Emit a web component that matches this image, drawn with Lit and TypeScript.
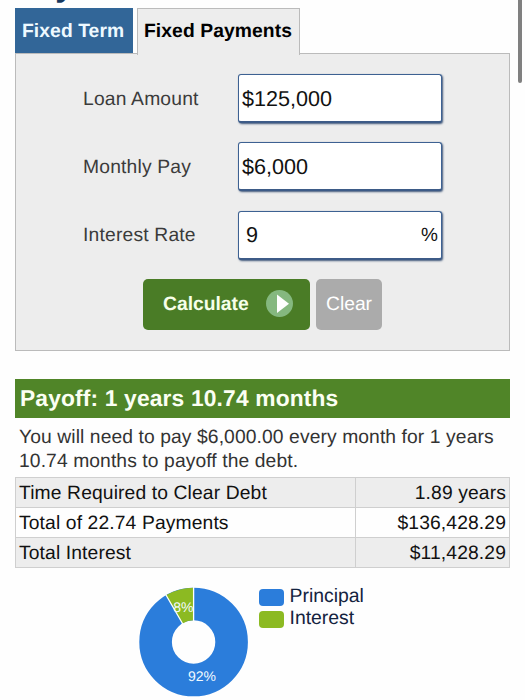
import { LitElement, html, css } from "lit";
import { customElement } from "lit/decorators.js";

@customElement("app-root")
export class AppRoot extends LitElement {
  static styles = css`
    :host {
      display: block;
      position: relative;
      width: 525px;
      height: 700px;
      overflow: hidden;
      background: #fefefe;
      font-family: "Liberation Sans", Arial, sans-serif;
      text-rendering: geometricPrecision;
      color: #111;
    }
    * { box-sizing: border-box; }
    .page { width: 495px; margin-left: 15px; }
    .title {
      margin: 0;
      height: 8px;
      display: flex;
      align-items: flex-end;
      font-size: 33px;
      line-height: 44px;
      color: #14375f;
    }
    .title span { margin-bottom: 1px; }
    .tabs { display: flex; gap: 4px; height: 46px; }
    .tab {
      font-weight: bold;
      font-size: 19.3px;
      line-height: 46px;
      height: 45px;
      white-space: nowrap;
      letter-spacing: 0.08px;
    }
    .term { width: 117.5px; padding-left: 7px; background: #326698; color: #eef9ff; line-height: 47px; }
    .payments {
      position: relative;
      width: 163.5px;
      height: 47px;
      padding-left: 6.5px;
      background: #ededed;
      border: 1px solid #bbb;
      border-bottom: 0;
      color: #000;
      z-index: 1;
    }
    .panel {
      height: 298px;
      margin-top: -1px;
      background: #ededed;
      border: 1px solid #bbb;
      padding: 20px 0 0 67px;
    }
    .row { display: flex; align-items: center; height: 49px; margin-bottom: 19.3px; }
    .label { width: 155px; padding-top: 2px; font-size: 19.3px; letter-spacing: 0.18px; color: #3b3b3b; }
    .field {
      width: 204px;
      height: 49px;
      display: flex;
      align-items: center;
      justify-content: space-between;
      padding: 1px 3px 0;
      background: #fff;
      border: 1.5px solid #3d6192;
      border-bottom: 2px solid #3d5b87;
      border-radius: 3px;
      box-shadow: 1px 1px 2px #40587a;
      font-size: 21.6px;
      color: #111;
    }
    .rate { padding-left: 7px; }
    .percent { font-size: 19px; padding-top: 1px; }
    .actions { display: flex; gap: 6px; margin-left: 60px; }
    .calculate {
      display: flex;
      align-items: center;
      justify-content: space-between;
      width: 167px;
      height: 51px;
      padding: 2px 17px 0 20px;
      border-radius: 5px;
      background: #4a7c26;
      color: #f6ffe9;
      font-size: 19.3px;
      font-weight: bold;
    }
    .arrow { width: 27px; height: 27px; margin-top: -4px; }
    .clear {
      width: 66px;
      height: 51px;
      border-radius: 5px;
      background: #ababab;
      color: #fff;
      font-size: 19.3px;
      line-height: 51px;
      text-align: center;
    }
    .payoff {
      margin: 28px 0 0;
      height: 39px;
      padding-left: 5px;
      background: #508528;
      color: #fbfff3;
      font-size: 22.8px;
      letter-spacing: 0.15px;
      line-height: 38px;
    }
    .summary {
      margin: 7px 0 5px;
      padding-left: 4px;
      height: 47px;
      color: #333;
      font-size: 19.3px;
      letter-spacing: 0.09px;
      line-height: 24px;
      padding-top: 1px;
      white-space: nowrap;
    }
    .table { border: 1px solid #cfcfcf; height: 91px; }
    .line {
      display: grid;
      grid-template-columns: 340px 1fr;
      height: 30px;
      border-bottom: 1px solid #cfcfcf;
      font-size: 19.3px;
      line-height: 31px;
      letter-spacing: 0.12px;
    }
    .line:last-child { border-bottom: 0; height: 29px; }
    .line:nth-child(odd) { background: #ededed; }
    .name { height: 29px; padding-left: 3px; border-right: 1px solid #cfcfcf; }
    .value { height: 29px; padding-right: 3px; text-align: right; }
    .chart { display: flex; gap: 11px; margin: 19px 0 0 123px; }
    .donut { width: 110px; height: 110px; flex: none; }
    .donut text { font: 14px "Liberation Sans", Arial, sans-serif; fill: #f3fbff; }
    .legend { display: grid; grid-auto-rows: 22px; margin-top: -2px; }
    .entry { display: flex; align-items: center; gap: 6px; color: #14233f; font-size: 19.4px; line-height: 22px; }
    .swatch { width: 24.5px; height: 17px; margin-top: 2px; border-radius: 4px; }
    .principal { background: #2b7ddb; }
    .interest { background: #8cba22; }
    .thumb {
      position: absolute;
      top: -20px;
      right: 3px;
      width: 4px;
      height: 103px;
      border-radius: 2px;
      background: #808080;
    }
  `;

  private fields = [
    { label: "Loan Amount", value: "$125,000" },
    { label: "Monthly Pay", value: "$6,000" },
    { label: "Interest Rate", value: "9", unit: "%" },
  ];

  private results = [
    ["Time Required to Clear Debt", "1.89 years"],
    ["Total of 22.74 Payments", "$136,428.29"],
    ["Total Interest", "$11,428.29"],
  ];

  render() {
    return html`
      <div class="page">
        <h1 class="title"><span>Pay</span></h1>
        <div class="tabs">
          <div class="tab term">Fixed Term</div>
          <div class="tab payments">Fixed Payments</div>
        </div>
        <section class="panel">
          ${this.fields.map(
            (f) => html`<div class="row">
              <div class="label">${f.label}</div>
              <div class="field ${f.unit ? "rate" : ""}">
                <span>${f.value}</span>
                ${f.unit ? html`<span class="percent">${f.unit}</span>` : ""}
              </div>
            </div>`
          )}
          <div class="actions">
            <div class="calculate">
              Calculate
              <svg class="arrow" viewBox="0 0 27 27">
                <circle cx="13.5" cy="13.5" r="13.5" fill="#85b87f" />
                <path d="M11 4.5V23L23 13.7Z" fill="#fff" />
              </svg>
            </div>
            <div class="clear">Clear</div>
          </div>
        </section>
        <h2 class="payoff">Payoff: 1 years 10.74 months</h2>
        <p class="summary">
          You will need to pay $6,000.00 every month for 1 years<br />10.74 months to payoff the debt.
        </p>
        <div class="table">
          ${this.results.map(
            ([name, value]) => html`<div class="line">
              <div class="name">${name}</div>
              <div class="value">${value}</div>
            </div>`
          )}
        </div>
        <div class="chart">
          <svg class="donut" viewBox="0 0 110 110">
            <circle cx="55.6" cy="55" r="38" fill="none" stroke="#2b7ddb" stroke-width="32.6" />
            <path d="M55.6 0.7V33.3A21.7 21.7 0 0 0 44.5 36.4L27.9 8.3A54.3 54.3 0 0 1 55.6 0.7Z" fill="#8cba22" />
            <path d="M55.6 0V34M27.7 7.5L44.8 37" stroke="#fff" stroke-width="1.3" />
            <text x="35.3" y="24.5">8%</text>
            <text x="50" y="94">92%</text>
          </svg>
          <div class="legend">
            <div class="entry"><span class="swatch principal"></span>Principal</div>
            <div class="entry"><span class="swatch interest"></span>Interest</div>
          </div>
        </div>
      </div>
      <div class="thumb"></div>
    `;
  }
}
